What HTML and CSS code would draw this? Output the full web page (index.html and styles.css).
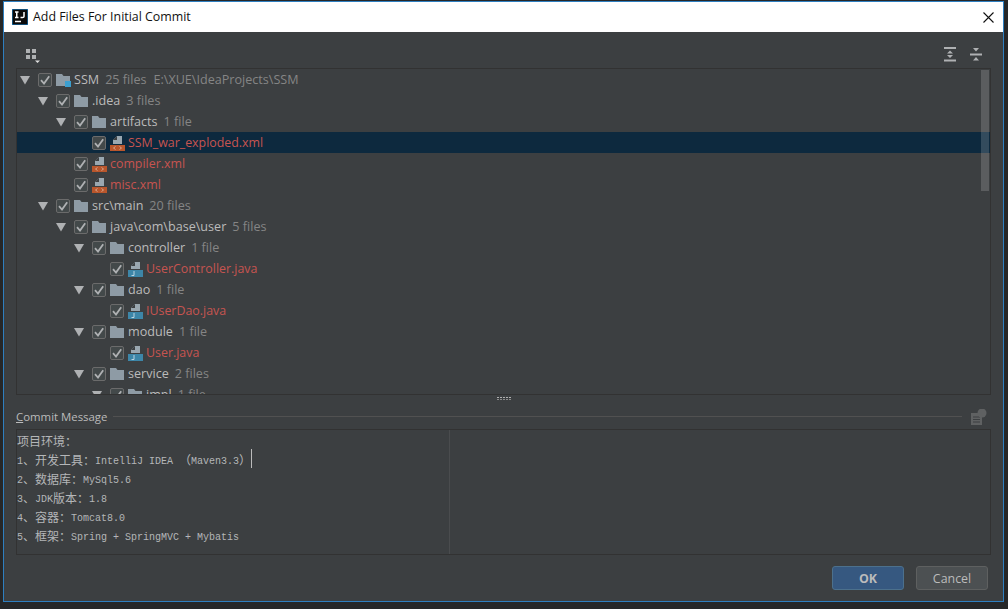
FILE: index.html
```html
<!DOCTYPE html>
<html lang="en">
<head>
<meta charset="utf-8">
<title>Add Files For Initial Commit</title>
<link rel="stylesheet" href="styles.css">
</head>
<body>
<svg class="defs" width="0" height="0" aria-hidden="true">
  <symbol id="check" viewBox="0 0 14 14"><path d="M3 7.2 L6 10.5 L11.2 3.2" fill="none" stroke="#afb1b3" stroke-width="1.8"/></symbol>
  <symbol id="arrow" viewBox="0 0 10 10"><path d="M0 1 H10 L5 9.5 Z" fill="#afb1b3"/></symbol>
  <symbol id="folder" viewBox="0 0 14 12"><path d="M0 0 H6 L7.5 2 H14 V12 H0 Z" fill="#8e9ba5"/></symbol>
  <symbol id="xml" viewBox="0 0 15 16"><path d="M3 9 V5 L7 1 H12 V9 Z" fill="#9aa7b0"/><path d="M3 5 H7 V1 Z" fill="#3c3f41"/><rect x="0" y="10" width="15" height="6" fill="#b9562c"/><path d="M5.5 11.5 L3.5 13 L5.500 14.500 M9.500 11.5 L11.500 13 L9.500 14.500" fill="none" stroke="#e0b8a0" stroke-width=".8"/></symbol>
  <symbol id="java" viewBox="0 0 15 16"><path d="M3 8 V5 L7 1 H12 V8 Z" fill="#9aa7b0"/><path d="M3 5 H7 V1 Z" fill="#3c3f41"/><rect x="0" y="9" width="15" height="7" fill="#3d86a8"/><path d="M6 10 V14.500 H3.500" fill="none" stroke="#c8dde6" stroke-width=".9"/></symbol>
</svg>
<div class="window">
  <header class="titlebar">
    <svg class="app-icon" width="16" height="16" viewBox="0 0 16 16"><rect width="16" height="16" fill="#0a0a0a"/><path d="M0 0 H16 V16 H0 Z" fill="none" stroke="#1d8fe0" stroke-width="1"/><path d="M3 3 H6.500 M4.750 3 V8.500 M3 8.500 H6.500 M12 3 V7.500 Q12 8.500 10.500 8.500 H8.500 M3 12.500 H9" fill="none" stroke="#fff" stroke-width="1.500"/></svg>
    <span class="title">Add Files For Initial Commit</span>
    <svg class="close" width="11" height="11" viewBox="0 0 11 11"><path d="M.5 .5 L10.500 10.500 M10.500 .5 L.5 10.500" stroke="#111" stroke-width="1.100" fill="none"/></svg>
  </header>
  <main class="content">
    <div class="toolbar">
      <svg class="tool-group" width="14" height="15" viewBox="0 0 14 15"><path d="M0 1 H4 V5 H0 Z M6 1 H10 V5 H6 Z M0 7 H4 V11 H0 Z M6 7 H10 V11 H6 Z" fill="#afb1b3"/><path d="M9 12.500 H14 L11.500 15 Z" fill="#e0e0e0"/></svg>
      <span class="spacer"></span>
      <svg class="tool-icon" width="12" height="15" viewBox="0 0 12 15"><path d="M0 0 H12 V2 H0 Z M0 12.500 H12 V14.500 H0 Z" fill="#afb1b3"/><path d="M6 3.500 L9 6.500 H3 Z M6 11 L3 8 H9 Z" fill="#afb1b3"/></svg>
      <svg class="tool-icon" width="12" height="15" viewBox="0 0 12 15"><path d="M0 6.500 H12 V8.500 H0 Z" fill="#afb1b3"/><path d="M3 1 H9 L6 4.500 Z M6 10 L9 13.500 H3 Z" fill="#afb1b3"/></svg>
    </div>

    <section class="tree">
      <div class="row l0"><svg class="arrow"><use href="#arrow"/></svg><span class="cb"><svg><use href="#check"/></svg></span><span class="root-icon"><svg class="folder"><use href="#folder"/></svg><i class="badge"></i></span><span class="name">SSM</span><span class="meta">25 files</span><span class="path">E:\XUE\IdeaProjects\SSM</span></div>
      <div class="row l1"><svg class="arrow"><use href="#arrow"/></svg><span class="cb"><svg><use href="#check"/></svg></span><svg class="folder"><use href="#folder"/></svg><span class="name">.idea</span><span class="meta">3 files</span></div>
      <div class="row l2"><svg class="arrow"><use href="#arrow"/></svg><span class="cb"><svg><use href="#check"/></svg></span><svg class="folder"><use href="#folder"/></svg><span class="name">artifacts</span><span class="meta">1 file</span></div>
      <div class="row l3 file selected"><span class="cb"><svg><use href="#check"/></svg></span><svg class="ficon"><use href="#xml"/></svg><span class="name new">SSM_war_exploded.xml</span></div>
      <div class="row l2 file"><span class="cb"><svg><use href="#check"/></svg></span><svg class="ficon"><use href="#xml"/></svg><span class="name new">compiler.xml</span></div>
      <div class="row l2 file"><span class="cb"><svg><use href="#check"/></svg></span><svg class="ficon"><use href="#xml"/></svg><span class="name new">misc.xml</span></div>
      <div class="row l1"><svg class="arrow"><use href="#arrow"/></svg><span class="cb"><svg><use href="#check"/></svg></span><svg class="folder"><use href="#folder"/></svg><span class="name">src\main</span><span class="meta">20 files</span></div>
      <div class="row l2"><svg class="arrow"><use href="#arrow"/></svg><span class="cb"><svg><use href="#check"/></svg></span><svg class="folder"><use href="#folder"/></svg><span class="name">java\com\base\user</span><span class="meta">5 files</span></div>
      <div class="row l3"><svg class="arrow"><use href="#arrow"/></svg><span class="cb"><svg><use href="#check"/></svg></span><svg class="folder"><use href="#folder"/></svg><span class="name">controller</span><span class="meta">1 file</span></div>
      <div class="row l4 file"><span class="cb"><svg><use href="#check"/></svg></span><svg class="ficon"><use href="#java"/></svg><span class="name new">UserController.java</span></div>
      <div class="row l3"><svg class="arrow"><use href="#arrow"/></svg><span class="cb"><svg><use href="#check"/></svg></span><svg class="folder"><use href="#folder"/></svg><span class="name">dao</span><span class="meta">1 file</span></div>
      <div class="row l4 file"><span class="cb"><svg><use href="#check"/></svg></span><svg class="ficon"><use href="#java"/></svg><span class="name new">IUserDao.java</span></div>
      <div class="row l3"><svg class="arrow"><use href="#arrow"/></svg><span class="cb"><svg><use href="#check"/></svg></span><svg class="folder"><use href="#folder"/></svg><span class="name">module</span><span class="meta">1 file</span></div>
      <div class="row l4 file"><span class="cb"><svg><use href="#check"/></svg></span><svg class="ficon"><use href="#java"/></svg><span class="name new">User.java</span></div>
      <div class="row l3"><svg class="arrow"><use href="#arrow"/></svg><span class="cb"><svg><use href="#check"/></svg></span><svg class="folder"><use href="#folder"/></svg><span class="name">service</span><span class="meta">2 files</span></div>
      <div class="row l4"><svg class="arrow"><use href="#arrow"/></svg><span class="cb"><svg><use href="#check"/></svg></span><svg class="folder"><use href="#folder"/></svg><span class="name">impl</span><span class="meta">1 file</span></div>
      <div class="scrollbar"></div>
    </section>

    <div class="splitter"><svg width="14" height="4" viewBox="0 0 14 4"><path d="M0 0 H2 V1 H0 Z M3 0 H5 V1 H3 Z M6 0 H8 V1 H6 Z M9 0 H11 V1 H9 Z M12 0 H14 V1 H12 Z" fill="#b0b0b0"/><path d="M0 2 H2 V3 H0 Z M3 2 H5 V3 H3 Z M6 2 H8 V3 H6 Z M9 2 H11 V3 H9 Z M12 2 H14 V3 H12 Z" fill="#8a8a8a"/></svg></div>

    <div class="commit-head">
      <span class="commit-label"><u>C</u>ommit Message</span>
      <span class="rule"></span>
      <svg class="history" width="16" height="16" viewBox="0 0 16 16"><rect x="0" y="4" width="11" height="12" fill="#5f6162"/><path d="M2 8 H9 M2 10.500 H9 M2 13 H9" stroke="#3c3f41" stroke-width="1" fill="none"/><circle cx="11" cy="4" r="4.500" fill="#5f6162"/></svg>
    </div>

    <section class="message">
      <div class="msg-text">
        <div class="line">项目环境：</div>
        <div class="line"><span class="m">1</span>、开发工具：<span class="m">IntelliJ IDEA </span>（<span class="m">Maven3.3</span>）<span class="caret"></span></div>
        <div class="line"><span class="m">2</span>、数据库：<span class="m">MySql5.6</span></div>
        <div class="line"><span class="m">3</span>、<span class="m">JDK</span>版本：<span class="m">1.8</span></div>
        <div class="line"><span class="m">4</span>、容器：<span class="m">Tomcat8.0</span></div>
        <div class="line"><span class="m">5</span>、框架：<span class="m">Spring + SpringMVC + Mybatis</span></div>
      </div>
      <div class="msg-side"></div>
    </section>

    <footer class="actions">
      <button class="btn primary" type="button">OK</button>
      <button class="btn" type="button">Cancel</button>
    </footer>
  </main>
</div>
</body>
</html>
```
FILE: styles.css
```css
* { box-sizing: border-box; }
html, body { margin: 0; height: 100%; }
body {
  width: 1008px;
  height: 609px;
  padding: 1px 4px 7px 3px;
  background: #262728;
  overflow: hidden;
  font-family: "Open Sans", "Noto Sans", sans-serif;
}
.defs { display: block; height: 0; }
.window {
  width: 1001px;
  height: 601px;
  border: 1px solid #2e7fc0;
  display: flex;
  flex-direction: column;
  background: #3c3f41;
}
.titlebar {
  height: 30px;
  flex: none;
  background: #fff;
  display: flex;
  align-items: center;
  padding: 0 9px 0 8px;
  color: #111;
  font-size: 12.4px;
}
.app-icon { flex: none; }
.title { margin: -2px 0 0 5px; }
.close { margin-left: auto; }

.content {
  flex: 1;
  min-height: 0;
  padding: 0 12px;
  display: flex;
  flex-direction: column;
}
.toolbar {
  height: 36px;
  flex: none;
  display: flex;
  align-items: flex-start;
  padding: 16px 9px 0 10px;
  gap: 14px;
}
.spacer { flex: 1; }
.tool-icon { margin-top: -1px; }

.tree {
  position: relative;
  height: 327px;
  flex: none;
  border: 1px solid #323232;
  overflow: hidden;
  color: #bbb;
  font-size: 12.6px;
}
.row {
  height: 21px;
  display: flex;
  align-items: center;
  white-space: nowrap;
}
.l0 { padding-left: 3px; }
.l1 { padding-left: 21px; }
.l2 { padding-left: 39px; }
.l3 { padding-left: 57px; }
.l4 { padding-left: 75px; }
.file.l2 { padding-left: 57px; }
.file.l3 { padding-left: 75px; }
.file.l4 { padding-left: 93px; }
.selected { background: #0d293e; }
.arrow { width: 10px; height: 10px; flex: none; margin-right: 8px; }
.cb {
  width: 14px;
  height: 14px;
  flex: none;
  border: 1px solid #6b6b6b;
  border-radius: 2px;
  background: #43494a;
  margin-right: 4px;
  display: flex;
  align-items: center;
  justify-content: center;
}
.cb svg { width: 14px; height: 14px; flex: none; }
.folder { width: 14px; height: 12px; flex: none; margin-right: 4px; }
.root-icon { position: relative; display: flex; }
.badge {
  position: absolute;
  left: 9px;
  top: 7px;
  width: 6px;
  height: 6px;
  background: #3b9fd0;
}
.ficon { width: 15px; height: 16px; flex: none; margin-right: 3px; margin-top: 1px; }
.name, .meta, .path { padding-bottom: 1px; }
.name.new { color: #c75450; font-size: 12.4px; }
.meta { color: #858585; margin-left: 6px; }
.path { color: #858585; margin-left: 7px; }

.scrollbar {
  position: absolute;
  right: 1px;
  top: 1px;
  width: 8px;
  height: 121px;
  background: rgba(255, 255, 255, .16);
}

.splitter {
  height: 9px;
  flex: none;
  display: flex;
  justify-content: center;
  padding-top: 2px;
}
.commit-head {
  height: 25px;
  flex: none;
  display: flex;
  align-items: center;
  color: #bbb;
  font-size: 11.4px;
}
.commit-label { flex: none; }
.rule { flex: 1; height: 1px; background: #515151; margin: 0 9px 0 6px; }
.history { flex: none; margin: 0 4px 0 0; }

.message {
  height: 126px;
  flex: none;
  border: 1px solid #323232;
  display: flex;
}
.msg-text {
  width: 433px;
  flex: none;
  border-right: 1px solid #4a4c4e;
  padding-top: 1px;
  color: #b4b6b8;
  font-family: "Noto Sans CJK SC", "Liberation Mono", monospace;
  font-size: 12px;
}
.msg-side { flex: 1; }
.line { height: 19px; line-height: 19px; white-space: pre; position: relative; }
.m { font-family: "Liberation Mono", monospace; font-size: 10px; line-height: 1; vertical-align: 1px; }
.caret {
  display: inline-block;
  width: 1px;
  height: 19px;
  margin-top: -1px;
  background: #bbb;
  vertical-align: top;
}

.actions {
  flex: 1;
  display: flex;
  justify-content: flex-end;
  gap: 12px;
  padding: 11px 3px 0 0;
}
.btn {
  width: 72px;
  height: 24px;
  border: 1px solid #5e6060;
  border-radius: 3px;
  background: #4c5052;
  color: #bbb;
  font: 12.4px "Open Sans", "Noto Sans", sans-serif;
  padding: 0;
}
.btn.primary {
  background: #365880;
  border-color: #4c708c;
  font-weight: 700;
}
```
